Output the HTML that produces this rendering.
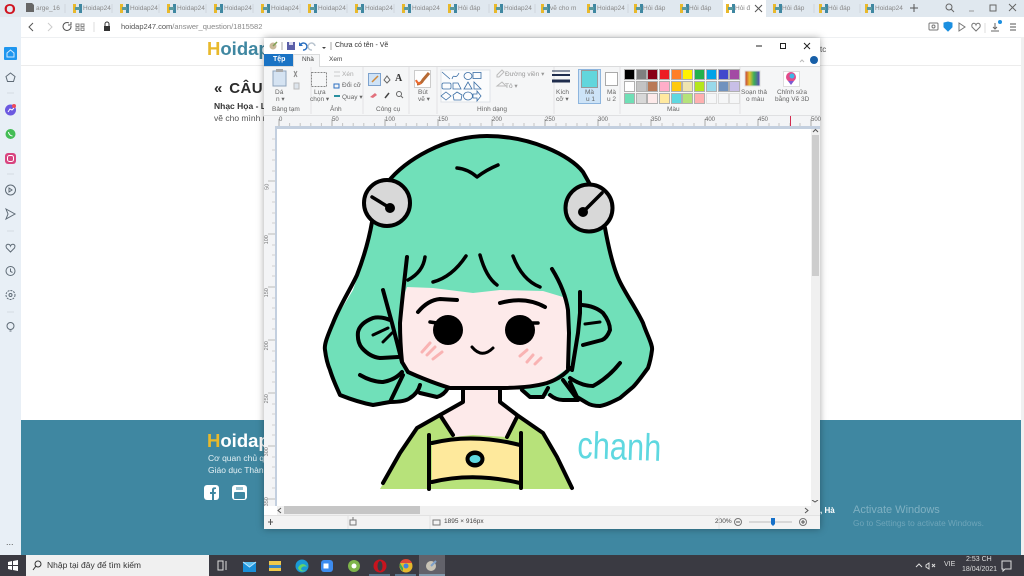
<!DOCTYPE html>
<html lang="vi"><head><meta charset="utf-8"><title>Paint</title>
<style>
html,body{margin:0;padding:0;width:1024px;height:576px;overflow:hidden;background:#fff;font-family:"Liberation Sans","Noto Sans CJK SC",sans-serif}
.a,.t{position:absolute}
.t{white-space:nowrap;line-height:1;color:#444}
#tabs .l{position:absolute;top:5px;font-size:6.5px;color:#888;white-space:nowrap}
.c{position:absolute;width:9px;height:9px;border:1px solid #b0b0b0}
.r{font-size:6.5px;color:#666}
.v{position:absolute;font-size:5.5px;color:#777;line-height:1;transform:rotate(-90deg);left:265px}
.h{position:absolute;top:117px;font-size:6px;line-height:1;color:#666}
</style></head><body>

<!-- browser chrome -->
<div class="a" style="left:0;top:0;width:1024px;height:17px;background:#e0e8ef"></div>
<div class="a" style="left:0;top:17px;width:21px;height:538px;background:#e8eff6"></div>
<div class="a" style="left:21px;top:17px;width:1003px;height:20px;background:#fff;border-bottom:1px solid #eef0f2"></div>
<div class="t" style="left:4px;top:2px;font-size:15px;font-weight:bold;color:#d0131f">O</div>

<div id="tabs">
<svg class="a" style="left:0;top:0" width="1024" height="17">
<defs><g id="hf"><rect x="0" y="0" width="3" height="9" fill="#e8b92c"/><rect x="6" y="0" width="3" height="9" fill="#3f87a1"/><rect x="2" y="3" width="5" height="3" fill="#5a9aa0"/></g></defs>
<rect x="723" y="0" width="43" height="17" fill="#fff"/>
<path d="M65 4v9M112 4v9M159 4v9M206 4v9M253 4v9M300 4v9M347 4v9M394 4v9M489 4v9M535 4v9M628 4v9M814 4v9M860 4v9" stroke="#cfd6dc"/>
<use href="#hf" x="73" y="4"/><use href="#hf" x="120" y="4"/><use href="#hf" x="167" y="4"/><use href="#hf" x="214" y="4"/><use href="#hf" x="261" y="4"/><use href="#hf" x="308" y="4"/><use href="#hf" x="355" y="4"/><use href="#hf" x="402" y="4"/><use href="#hf" x="448" y="4"/><use href="#hf" x="494" y="4"/><use href="#hf" x="541" y="4"/><use href="#hf" x="587" y="4"/><use href="#hf" x="634" y="4"/><use href="#hf" x="680" y="4"/><use href="#hf" x="726" y="4"/><use href="#hf" x="773" y="4"/><use href="#hf" x="819" y="4"/><use href="#hf" x="865" y="4"/>
<path d="M26 3h6l2 2v7h-8z" fill="#666"/>
<path d="M755 5l7 7m0-7l-7 7" stroke="#555" stroke-width="1" fill="none"/>
<path d="M914 4v8m-4-4h8" stroke="#555" stroke-width="1" fill="none"/>
<circle cx="949" cy="7" r="3" stroke="#666" fill="none"/><path d="M951 9l3 3" stroke="#666"/>
<path d="M969 11h5" stroke="#999"/>
<rect x="990" y="5" width="6" height="6" stroke="#666" fill="none"/>
<path d="M1009 4l7 7m0-7l-7 7" stroke="#666" fill="none"/>
</svg>
<span class="l" style="left:36px">arge_16</span>
<span class="l" style="left:83px">Hoidap24</span><span class="l" style="left:130px">Hoidap24</span><span class="l" style="left:177px">Hoidap24</span><span class="l" style="left:224px">Hoidap24</span><span class="l" style="left:271px">Hoidap24</span><span class="l" style="left:318px">Hoidap24</span><span class="l" style="left:365px">Hoidap24</span><span class="l" style="left:412px">Hoidap24</span>
<span class="l" style="left:458px">Hỏi đáp</span><span class="l" style="left:504px">Hoidap24</span><span class="l" style="left:550px">vẽ cho m</span><span class="l" style="left:597px">Hoidap24</span><span class="l" style="left:643px">Hỏi đáp</span><span class="l" style="left:689px">Hỏi đáp</span><span class="l" style="left:735px">Hỏi đ</span><span class="l" style="left:782px">Hỏi đáp</span><span class="l" style="left:828px">Hỏi đáp</span><span class="l" style="left:875px">Hoidap24</span>
</div>

<!-- address bar -->
<svg class="a" style="left:21px;top:17px" width="1003" height="20" fill="none" stroke="#555">
<path d="M12 6l-4 4 4 4"/><path d="M27 6l4 4-4 4" stroke="#ccc"/>
<path d="M48 6a4 4 0 1 0 2 3M50 5v3h-3"/>
<rect x="55" y="7" width="3" height="2.500" stroke="#888"/><rect x="60" y="7" width="3" height="2.500" stroke="#888"/><rect x="55" y="11" width="3" height="2.500" stroke="#888"/><rect x="60" y="11" width="3" height="2.500" stroke="#888"/>
<path d="M73 5v10" stroke="#ddd"/>
<rect x="83" y="9" width="6" height="5" fill="#333" stroke="none"/><path d="M84 9V7a2 2 0 0 1 4 0v2" stroke="#333"/>
<rect x="908" y="6" width="9" height="7" rx="1" stroke="#777"/><circle cx="912.500" cy="9.500" r="1.500" stroke="#777"/>
<path d="M923 6l4-1 4 1v4l-4 4-4-4z" fill="#1b8fe0" stroke="#1b8fe0"/>
<path d="M938 6l6 4-6 4z" stroke="#777"/>
<path d="M955 14l-4-4c-1-4 3-5 4-2 1-3 5-2 4 2z" stroke="#777"/>
<path d="M964 6v10" stroke="#ddd"/>
<path d="M974 6v6m-2-2l2 2 2-2M970 14h8" stroke="#666"/>
<circle cx="979" cy="5" r="2" fill="#1b8fe0" stroke="none"/>
<path d="M989 7h6M989 10h6M989 13h6" stroke="#555"/>
</svg>
<div class="t" style="left:121px;top:23px;font-size:7.500px;color:#555">hoidap247.com<span style="color:#888">/answer_question/1815582</span></div>

<!-- sidebar icons -->
<svg class="a" style="left:0;top:40px" width="21" height="310" fill="none" stroke="#5f6b76">
<rect x="4" y="7" width="13" height="13" rx="1" fill="#1e96ef" stroke="none"/><path d="M7 13l3.500-3 3.500 3v4H7z" stroke="#cfe8ff"/>
<path d="M10.500 33l4.500 3.500-1.500 5h-6l-1.500-5z"/>
<path d="M7 53h7" stroke="#d5dbe1"/>
<circle cx="10.500" cy="70" r="5.500" fill="#6c59e0" stroke="none"/><circle cx="14" cy="66" r="2" fill="#ef4a5a" stroke="none"/><path d="M8 72l2-3 2 1 2-2" stroke="#fff"/>
<circle cx="10.500" cy="94" r="5" fill="#43bd55" stroke="none"/><path d="M8.500 92c0 2 2 4 4 4" stroke="#fff"/>
<rect x="5" y="113" width="11" height="11" rx="3" fill="#d8447f" stroke="none"/><rect x="7.500" y="115.500" width="6" height="6" rx="2" stroke="#fff"/>
<path d="M7 134h7" stroke="#d5dbe1"/>
<circle cx="10.500" cy="150" r="5"/><path d="M9 148l3 2-3 2z"/>
<path d="M6 169l9 5-9 5 2-5z"/>
<path d="M7 191h7" stroke="#d5dbe1"/>
<path d="M10.500 212l-4-4c-2-4 3-5 4-2 1-3 6-2 4 2z"/>
<circle cx="10.500" cy="231" r="4.500"/><path d="M10.500 228.500v3l2 1"/>
<circle cx="10.500" cy="255" r="4.500" stroke-dasharray="2 1"/><circle cx="10.500" cy="255" r="1.500"/>
<path d="M7 272h7" stroke="#d5dbe1"/>
<circle cx="10.500" cy="286" r="3.500"/><path d="M9.500 291h2"/>
</svg>
<div class="t" style="left:6px;top:538px;font-size:9px;color:#555">...</div>

<!-- page -->
<div class="a" style="left:21px;top:65px;width:1000px;height:1px;background:#ececec"></div>
<div class="t" style="left:207px;top:40px;font-size:18.500px;font-weight:bold;color:#3f87a1"><span style="color:#e8b92c">H</span>oidap</div>
<div class="t" style="left:820px;top:46px;font-size:8px;color:#555">tc</div>
<div class="t" style="left:214px;top:81px;font-size:15px;font-weight:bold;color:#2b2b2b;letter-spacing:.4px;word-spacing:2px">« CÂU HỎI</div>
<div class="t" style="left:214px;top:102px;font-size:8.500px;font-weight:bold;color:#333">Nhạc Họa - Lớp</div>
<div class="t" style="left:214px;top:114px;font-size:8.500px;color:#555">vẽ cho mình nhé</div>

<!-- footer -->
<div class="a" style="left:21px;top:420px;width:1000px;height:135px;background:#3f87a1"></div>
<div class="t" style="left:207px;top:432px;font-size:18.500px;font-weight:bold;color:#fff"><span style="color:#e8b92c">H</span>oidap</div>
<div class="t" style="left:208px;top:454px;font-size:8.500px;color:#e4f0f4">Cơ quan chủ quản: Công ty</div>
<div class="t" style="left:208px;top:466px;font-size:8.500px;color:#e4f0f4">Giáo dục Thành Phát</div>
<svg class="a" style="left:203px;top:484px" width="46" height="18">
<rect x="1" y="1" width="15" height="15" rx="3" fill="#fff"/><path d="M9 16v-6H7V8h2V6c0-2 1-3 4-2.500V5c-2 0-2 .5-2 1.500V8h2l-.4 2H11v6z" fill="#3f87a1"/>
<rect x="29" y="1" width="15" height="15" rx="3" fill="#fff"/><rect x="31" y="8" width="11" height="7" rx="1" fill="#3f87a1"/><rect x="33" y="3" width="7" height="3" fill="#9cc3d1"/>
</svg>
<div class="t" style="left:820px;top:507px;font-size:8px;color:#fff;font-weight:bold;z-index:1">, Hà</div>
<div class="t" style="left:853px;top:505px;font-size:11px;color:#7fb0c2">Activate Windows</div>
<div class="t" style="left:853px;top:519px;font-size:8.300px;color:#6ea5b9">Go to Settings to activate Windows.</div>
<div class="a" style="left:1021px;top:37px;width:3px;height:518px;background:#f0f0f0"></div>

<!-- PAINT WINDOW -->
<div class="a" style="left:264px;top:38px;width:556px;height:491px;background:#fff;box-shadow:0 0 7px rgba(0,0,0,.35)"></div>
<div class="a" style="left:264px;top:66px;width:556px;height:49px;background:#f5f6f7;border-top:1px solid #dadbdc;box-sizing:border-box"></div>
<div class="a" style="left:264px;top:54px;width:29px;height:12px;background:#1a73c4"></div>
<div class="t" style="left:273px;top:56px;font-size:7px;color:#fff;font-weight:bold">Tệp</div>
<div class="a" style="left:293px;top:54px;width:27px;height:13px;background:#f5f6f7;border:1px solid #dadbdc;border-bottom:0;box-sizing:border-box"></div>
<div class="t" style="left:302px;top:57px;font-size:6.500px">Nhà</div>
<div class="t" style="left:329px;top:57px;font-size:6.500px">Xem</div>
<div class="t" style="left:335px;top:42px;font-size:7px;color:#333">Chưa có tên - Vẽ</div>

<svg class="a" style="left:264px;top:38px" width="556" height="78" fill="none">
<defs><linearGradient id="sp" x1="0" x2="1" y1="0" y2="0"><stop offset="0" stop-color="#c23a3a"/><stop offset=".3" stop-color="#e8c02e"/><stop offset=".6" stop-color="#3cae59"/><stop offset="1" stop-color="#5a3fc0"/></linearGradient></defs>
<circle cx="9" cy="8" r="3.500" fill="#c9b99a"/><path d="M9 8l4-4" stroke="#7fa055" stroke-width="1.500"/>
<path d="M18 4v8" stroke="#aaa"/>
<rect x="23" y="4" width="8" height="8" fill="#5b5fa8"/><rect x="25" y="4" width="4" height="3" fill="#d8d8ee"/>
<path d="M36 8a3.500 3.500 0 1 1 3 4" stroke="#2a6fc0" stroke-width="1.500"/><path d="M35 4v4h4" fill="#2a6fc0"/>
<path d="M51 8a3.500 3.500 0 1 0-3 4" stroke="#b9c4cf" stroke-width="1.500"/>
<path d="M58 9l2 2 2-2z" fill="#444"/><path d="M67 4v8" stroke="#aaa"/>
<path d="M492 8h6" stroke="#222"/><rect x="516.500" y="5.500" width="5" height="5" stroke="#222"/>
<path d="M540 5l6 6m0-6l-6 6" stroke="#222"/>
<path d="M536 24l2-2 2 2" stroke="#bbb"/><circle cx="550" cy="22" r="4" fill="#175fa8"/>
<path d="M47 29v47M99 29v47M145 29v47M173 29v47M290 29v47M356 29v47M476 29v47" stroke="#e2e3e4"/>
<rect x="9" y="33" width="13" height="15" fill="#d5e3f2" stroke="#8ea4bd"/><rect x="12" y="31" width="7" height="3" fill="#aaa"/>
<path d="M30 33l3 6m0-6l-3 6" stroke="#888"/><rect x="30" y="45" width="5" height="6" fill="#dde4ec" stroke="#bbb"/>
<rect x="47.500" y="34.500" width="15" height="14" stroke="#888" stroke-dasharray="2 1"/>
<path d="M70 34h6M70 38h6" stroke="#ccc"/><rect x="70" y="46" width="5" height="4" stroke="#2a6fc0"/><path d="M70 58h6" stroke="#2a90a0" stroke-width="2"/>
<rect x="104.500" y="35.500" width="12" height="12" fill="#cfe3f7" stroke="#7da2ce"/><path d="M108 44l6-6" stroke="#d08a3a" stroke-width="1.500"/>
<path d="M120 42l3-4 3 4-3 3z" stroke="#666"/>
<path d="M106 59l5-4 2 2-4 3z" fill="#e2707c"/><path d="M121 60l4-5" stroke="#444" stroke-width="1.500"/>
<circle cx="135" cy="56" r="2.500" stroke="#666"/><path d="M137 58l2 2" stroke="#666"/>
<rect x="150.500" y="32.500" width="16" height="17" fill="#fff" stroke="#ccc"/><path d="M153 46c3 0 5-2 6-4l6-7" stroke="#b76a34" stroke-width="3"/><path d="M152 42c1 3 3 4 5 3" stroke="#ed6a2f" stroke-width="2"/>
<rect x="177" y="32" width="49" height="32" fill="#fbfcfd" stroke="#dfe3e8"/>
<g stroke="#3a6ea5" stroke-width=".800">
<path d="M178 34l8 7M188 41c2-7 3 2 7-6"/><ellipse cx="204" cy="38" rx="4" ry="3.500"/><rect x="209" y="34.500" width="8" height="6"/>
<rect x="178" y="45" width="9" height="6" rx="1.500"/><path d="M189 51v-6h5l3 6zM200 51l4-7 4 7zM210 44v7h7z"/>
<path d="M182 54l5 4-5 4-5-4zM193 54l5 3-1 5h-7l-1-5z"/><ellipse cx="204" cy="58" rx="4.500" ry="4"/><path d="M209 56h4v-3l4 5-4 5v-3h-4z"/>
</g>
<path d="M233 37l5-5 2 2-5 5h-2zM233 48l5-4 4 4z" stroke="#bbb"/>
<path d="M288 33h18" stroke="#1f2d4d"/><path d="M288 37h18" stroke="#1f2d4d" stroke-width="2"/><path d="M288 43h18" stroke="#1f2d4d" stroke-width="3"/>
<rect x="314.500" y="31.500" width="22" height="34" fill="#cde3f7" stroke="#8db5de"/>
<rect x="317.500" y="32.500" width="16" height="17" fill="#62d6dc" stroke="#999"/>
<rect x="341.500" y="34.500" width="12" height="13" fill="#fff" stroke="#aaa"/>
<rect x="481" y="33" width="15" height="15" fill="url(#sp)" stroke="#ddd"/>
<rect x="519.500" y="33.500" width="16" height="15" fill="#fff" stroke="#ddd"/><circle cx="527" cy="39" r="5" fill="#e34a8a"/><circle cx="528" cy="38" r="2.500" fill="#3eb7e6"/><path d="M524 43l3 4 3-4z" fill="#7b5bd0"/>
</svg>

<!-- palette -->
<div class="c" style="left:624px;top:69px;background:#000"></div><div class="c" style="left:636px;top:69px;background:#7f7f7f"></div><div class="c" style="left:647px;top:69px;background:#880015"></div><div class="c" style="left:659px;top:69px;background:#ed1c24"></div><div class="c" style="left:671px;top:69px;background:#ff7f27"></div><div class="c" style="left:682px;top:69px;background:#fff200"></div><div class="c" style="left:694px;top:69px;background:#22b14c"></div><div class="c" style="left:706px;top:69px;background:#00a2e8"></div><div class="c" style="left:718px;top:69px;background:#3f48cc"></div><div class="c" style="left:729px;top:69px;background:#a349a4"></div>
<div class="c" style="left:624px;top:81px;background:#fff"></div><div class="c" style="left:636px;top:81px;background:#c3c3c3"></div><div class="c" style="left:647px;top:81px;background:#b97a57"></div><div class="c" style="left:659px;top:81px;background:#ffaec9"></div><div class="c" style="left:671px;top:81px;background:#ffc90e"></div><div class="c" style="left:682px;top:81px;background:#efe4b0"></div><div class="c" style="left:694px;top:81px;background:#b5e61d"></div><div class="c" style="left:706px;top:81px;background:#99d9ea"></div><div class="c" style="left:718px;top:81px;background:#7092be"></div><div class="c" style="left:729px;top:81px;background:#c8bfe7"></div>
<div class="c" style="left:624px;top:93px;background:#6fdfb6"></div><div class="c" style="left:636px;top:93px;background:#d8d8d8"></div><div class="c" style="left:647px;top:93px;background:#fdeaea"></div><div class="c" style="left:659px;top:93px;background:#ffe9a0"></div><div class="c" style="left:671px;top:93px;background:#5fd8e0"></div><div class="c" style="left:682px;top:93px;background:#b5e27a"></div><div class="c" style="left:694px;top:93px;background:#ffb0b0"></div><div class="c" style="left:706px;top:93px;background:#f5f6f7;border-color:#ddd"></div><div class="c" style="left:718px;top:93px;background:#f5f6f7;border-color:#ddd"></div><div class="c" style="left:729px;top:93px;background:#f5f6f7;border-color:#ddd"></div>

<!-- ribbon labels -->
<div class="t r" style="left:275px;top:90px">Dá</div><div class="t r" style="left:276px;top:97px">n ▾</div>
<div class="t r" style="left:272px;top:107px">Bảng tạm</div>
<div class="t r" style="left:314px;top:90px">Lựa</div><div class="t r" style="left:310px;top:97px">chọn ▾</div>
<div class="t r" style="left:342px;top:72px;color:#aaa">Xén</div><div class="t r" style="left:342px;top:83px">Đổi cỡ</div><div class="t r" style="left:342px;top:95px">Quay ▾</div>
<div class="t r" style="left:330px;top:107px">Ảnh</div>
<div class="t" style="left:395px;top:74px;font-size:10px;font-weight:bold;font-family:'Liberation Serif',serif;color:#333">A</div>
<div class="t r" style="left:376px;top:107px">Công cụ</div>
<div class="t r" style="left:418px;top:90px">Bút</div><div class="t r" style="left:418px;top:97px">vẽ ▾</div>
<div class="t r" style="left:477px;top:107px">Hình dạng</div>
<div class="t r" style="left:505px;top:72px;color:#999">Đường viền ▾</div><div class="t r" style="left:505px;top:84px;color:#999">Tô ▾</div>
<div class="t r" style="left:556px;top:90px">Kích</div><div class="t r" style="left:556px;top:97px">cỡ ▾</div>
<div class="t r" style="left:585px;top:90px">Mà</div><div class="t r" style="left:586px;top:97px">u 1</div>
<div class="t r" style="left:607px;top:90px">Mà</div><div class="t r" style="left:607px;top:97px">u 2</div>
<div class="t r" style="left:667px;top:107px">Màu</div>
<div class="t r" style="left:741px;top:90px">Soạn thả</div><div class="t r" style="left:746px;top:97px">o màu</div>
<div class="t r" style="left:777px;top:90px">Chỉnh sửa</div><div class="t r" style="left:775px;top:97px">bằng Vẽ 3D</div>

<!-- rulers -->
<div class="a" style="left:264px;top:115px;width:556px;height:11px;background:#f3f4f6;border-top:1px solid #dfe0e2;box-sizing:border-box"></div>
<div class="a" style="left:264px;top:126px;width:556px;height:3px;background:#c3cfdf"></div>
<div class="a" style="left:264px;top:126px;width:11px;height:380px;background:#f3f4f6"></div>
<div class="a" style="left:275px;top:126px;width:2px;height:380px;background:#c3cfdf"></div>
<svg class="a" style="left:264px;top:115px" width="556" height="392" fill="none">
<path d="M15 4v7M68 4v7M121 4v7M174 4v7M228 4v7M281 4v7M334 4v7M387 4v7M441 4v7M494 4v7M547 4v7" stroke="#aaa"/>
<path d="M25.600 8v3M36.200 8v3M46.800 8v3M57.400 8v3M78.600 8v3M89.200 8v3M99.800 8v3M110.400 8v3M131.600 8v3M142.200 8v3M152.800 8v3M163.400 8v3M185 8v3M196 8v3M206 8v3M217 8v3M239 8v3M249 8v3M260 8v3M270 8v3M292 8v3M302 8v3M313 8v3M323 8v3M345 8v3M356 8v3M366 8v3M377 8v3M398 8v3M409 8v3M419 8v3M430 8v3M452 8v3M462 8v3M473 8v3M483 8v3M505 8v3M515 8v3M526 8v3M536 8v3" stroke="#c4c4c4"/>
<path d="M526.500 1v10" stroke="#d22b4f"/>
<path d="M4 66h7M4 119h7M4 172h7M4 225h7M4 278h7M4 331h7M4 384h7" stroke="#bbb"/>
<path d="M8 24h3M8 35h3M8 45h3M8 56h3M8 77h3M8 87h3M8 98h3M8 108h3M8 130h3M8 140h3M8 151h3M8 161h3M8 183h3M8 193h3M8 204h3M8 214h3M8 236h3M8 246h3M8 257h3M8 267h3M8 289h3M8 299h3M8 310h3M8 320h3M8 342h3M8 352h3M8 363h3M8 373h3" stroke="#d0d0d0"/>
</svg>
<div class="h" style="left:279px">0</div><div class="h" style="left:332px">50</div><div class="h" style="left:385px">100</div><div class="h" style="left:438px">150</div><div class="h" style="left:492px">200</div><div class="h" style="left:545px">250</div><div class="h" style="left:598px">300</div><div class="h" style="left:651px">350</div><div class="h" style="left:705px">400</div><div class="h" style="left:758px">450</div><div class="h" style="left:811px">500</div>
<div class="v" style="top:184px">50</div><div class="v" style="top:237px;left:263px">100</div><div class="v" style="top:290px;left:263px">150</div><div class="v" style="top:343px;left:263px">200</div><div class="v" style="top:396px;left:263px">250</div><div class="v" style="top:449px;left:263px">300</div><div class="v" style="top:499px;left:263px">350</div>

<!-- canvas drawing -->
<svg class="a" style="left:277px;top:129px" width="534" height="377" viewBox="277 129 534 377">
<rect x="277" y="129" width="534" height="377" fill="#fff"/>
<path d="M380 489L400 453L417 428L440 415L463 402L500 402L517 415L543 433L557 457L573 489Z" fill="#b7e27a"/>
<path d="M440 415L463 402V385H500V402L517 415L507 437L473 435L453 437Z" fill="#fdeaea"/>
<path d="M432 443L473 437L520 445V483L473 475L432 482Z" fill="#fee99c"/>
<!-- hair fill -->
<path d="M387 183C405 160 445 136 487 136C530 136 570 155 583 172L592 188L605 228C609 250 614 270 620 282C627 296 637 310 643 323C647 335 653 345 652 350C651 358 650 362 648 368C642 376 638 382 633 387L620 398L600 406L587 403L577 400L563 400L550 395L543 397L530 397L522 390L490 385L448 388L437 397L420 393L410 398L390 402L373 405L340 395L330 370L325 350L333 323L353 290L365 255L372 222Z" fill="#70e0b9"/>
<!-- face fill -->
<path d="M407 287L433 288L473 293L500 290L543 291L563 297L569 313L569 333L568 368L547 383L500 388H460L450 388L408 372L402 362L400 323L404 295Z" fill="#fdeaea"/>
<g stroke="#000" stroke-width="4" fill="none" stroke-linecap="round" stroke-linejoin="round">
<path d="M387 183C405 160 445 136 487 136C530 136 570 155 583 172L592 188"/>
<path d="M372 222C368 245 362 262 357 275C350 290 340 305 333 323C327 337 324 345 325 350C326 358 327 363 330 370C333 380 337 388 340 395C350 399 362 403 373 405L390 402L403 375"/>
<path d="M605 228C609 250 614 270 620 282C627 296 637 310 643 323C647 335 653 345 652 350C651 358 650 362 648 368C642 376 638 382 633 387L620 398C612 402 606 405 600 406C595 406 590 405 587 403L577 397L570 382"/>
<path d="M457 168Q468 169 477 177Q486 170 498 165" stroke-width="3.500"/>
<path d="M407 257C405 275 402 300 400 323C400 340 401 352 402 362L408 372"/>
<path d="M425 257Q423 272 408 280" stroke-width="3.500"/>
<path d="M466 256Q452 277 433 282" stroke-width="3.500"/><path d="M480 255Q486 277 497 285" stroke-width="3.500"/>
<path d="M513 256Q522 280 540 287" stroke-width="3.500"/>
<path d="M552 269Q565 290 568 310L569 333L568 368"/>
<path d="M580 292L580 313L578 333L572 370"/>
<path d="M383 290L392 323L402 362"/>
<path d="M408 372Q430 382 450 388L500 388Q530 388 547 383Q562 378 570 368"/>
<path d="M418 312Q428 300 440 299L457 300" stroke-width="4"/><path d="M500 303Q525 296 545 307" stroke-width="4"/>
<path d="M430 322L437 323M538 323L531 323" stroke-width="3.500"/>
<path d="M472 347Q482 359 493 348" stroke-width="3"/>
<path d="M390 320Q380 316 373 318Q360 323 358 332Q357 342 362 348Q370 357 380 358L398 357"/>
<path d="M373 335L388 328M383 342L392 333" stroke-width="3"/>
<path d="M582 305Q595 306 603 313Q610 322 610 330Q607 338 602 340L583 345"/><path d="M585 324L600 322" stroke-width="3"/>
<path d="M360 375Q372 382 383 382Q395 380 402 372"/>
<path d="M620 363Q608 378 593 386Q582 386 570 378"/>
<path d="M390 402Q405 402 410 398Q418 393 420 385"/><path d="M420 393L437 397Q444 395 448 388"/>
<path d="M522 390L530 397L543 397L548 388"/><path d="M550 395Q556 400 563 400L578 400L563 380"/>
<path d="M463 390V402L440 415L417 428L400 453L383 483"/><path d="M500 390V402L517 415L543 433L557 457L572 488"/>
<path d="M440 415L453 435"/><path d="M517 417L507 437"/>
<path d="M432 443Q473 433 520 445"/><path d="M432 482Q473 472 520 483"/>
<path d="M429 435V489M521 433V488"/>
</g>
<g stroke="#000" stroke-width="4" fill="#d8d8d8"><circle cx="387" cy="203" r="23"/><circle cx="589" cy="208" r="23.500"/></g>
<path d="M372 197L390 208M602 193L583 212" stroke="#000" stroke-width="3.500" stroke-linecap="round"/>
<circle cx="390" cy="208" r="5"/><circle cx="583" cy="212" r="5"/>
<circle cx="448" cy="330" r="15"/><circle cx="520" cy="330" r="15"/>
<g stroke="#f9b3b3" stroke-width="3" stroke-linecap="round"><path d="M422 352L430 343M427 355L435 347M433 359L442 352M520 356L527 350M527 362L533 355M535 364L541 358"/></g>
<ellipse cx="475" cy="459" rx="9.500" ry="8.500"/><ellipse cx="475" cy="459" rx="5.500" ry="4" fill="#5fd8e0"/>
<text x="577" y="458" font-family="Liberation Sans,sans-serif" font-size="38" textLength="84" lengthAdjust="spacingAndGlyphs" fill="#5fd8e0" transform="rotate(2 577 458)">chanh</text>
</svg>

<!-- scrollbars -->
<div class="a" style="left:811px;top:129px;width:9px;height:377px;background:#f0f0f0"></div>
<div class="a" style="left:812px;top:135px;width:7px;height:141px;background:#cdcdcd"></div>
<div class="a" style="left:277px;top:506px;width:543px;height:9px;background:#f0f0f0"></div>
<div class="a" style="left:284px;top:506px;width:136px;height:8px;background:#c6c6c6"></div>
<!-- status -->
<div class="a" style="left:264px;top:515px;width:556px;height:14px;background:#f3f3f3;border-top:1px solid #e2e2e2;box-sizing:border-box"></div>
<div class="t" style="left:444px;top:519px;font-size:6.500px;color:#444">1895 × 916px</div>
<div class="t" style="left:715px;top:519px;font-size:6.500px;color:#444">200%</div>
<svg class="a" style="left:264px;top:500px" width="556" height="29" fill="none">
<path d="M4 22h5M6.500 19v6" stroke="#555"/>
<path d="M86 20h6v5h-6zM89 17v3" stroke="#777"/><path d="M169 20h7v5h-7z" stroke="#777"/>
<path d="M17 8l-3 2.500 3 2.500" stroke="#555"/>
<path d="M541 8l3 2.500-3 2.500" stroke="#555"/>
<path d="M548 0l3 2 3-2" stroke="#555"/>
<path d="M84 15V29M166 15V29M455 15V29" stroke="#e2e2e2"/>
<circle cx="474" cy="22" r="3.500" stroke="#777"/><path d="M472 22h4" stroke="#555"/>
<path d="M485 22h43" stroke="#d0d0d0" stroke-width="1.500"/><path d="M507 18h4v6l-2 2-2-2z" fill="#1570c9"/>
<circle cx="539" cy="22" r="3.500" stroke="#777"/><path d="M537 22h4M539 20v4" stroke="#555"/>
</svg>
<svg class="a" style="left:811px;top:127px" width="9" height="8"><path d="M2 5l2.500-2.500L7 5" stroke="#555" fill="none"/></svg>

<!-- taskbar -->
<div class="a" style="left:0;top:555px;width:1024px;height:21px;background:#3a3a42"></div>
<div class="a" style="left:26px;top:555px;width:183px;height:21px;background:#f0f0f0"></div>
<div class="t" style="left:47px;top:561px;font-size:8.500px;color:#333">Nhập tại đây để tìm kiếm</div>
<div class="a" style="left:419px;top:555px;width:26px;height:21px;background:#62626a"></div>
<svg class="a" style="left:0;top:555px" width="1024" height="21" fill="none">
<path d="M8 7l4-1v4H8zM13 6l5-1v5h-5zM8 11h4v4l-4-1zM13 11h5v5l-5-1z" fill="#fff"/>
<circle cx="38" cy="9" r="3" stroke="#333"/><path d="M36 11l-3 4" stroke="#333"/>
<rect x="218" y="6" width="5" height="9" stroke="#ddd"/><path d="M226 6v9" stroke="#ddd"/>
<rect x="243" y="7" width="13" height="10" fill="#1a8fd8"/><path d="M243 7l6.500 5 6.500-5" stroke="#bfe6ff" fill="#5cc0f2"/>
<rect x="269" y="6" width="12" height="10" fill="#f0c84a"/><rect x="269" y="10" width="12" height="3" fill="#3b86c4"/>
<circle cx="302" cy="11" r="6.500" fill="#1a9ad6"/><path d="M298 13c2-5 7-5 9-1-2-1-5-1-6 2 1 2 3 2 5 1-3 3-7 1-8-2z" fill="#62d46a"/>
<rect x="321" y="5" width="12" height="12" rx="3" fill="#3d8cf0"/><rect x="323.500" y="8.500" width="5" height="5" fill="#fff"/>
<circle cx="354" cy="11" r="6" fill="#7fb54a"/><circle cx="354" cy="11" r="2.500" fill="#fff"/>
<ellipse cx="380" cy="11" rx="6.500" ry="6.500" fill="#c8141e"/><ellipse cx="380" cy="11" rx="2.500" ry="5" fill="#3a3a42"/>
<circle cx="406" cy="11" r="6.500" fill="#e5b82d"/><path d="M400 8a6.500 6.500 0 0 1 12 0h-6z" fill="#df4a37"/><path d="M403 16a6.500 6.500 0 0 1-3-8l3 5z" fill="#3cab54"/><circle cx="406" cy="11" r="2.500" fill="#3f84e0"/>
<circle cx="431" cy="11" r="5" fill="#c9c4b6"/><path d="M431 11l5-5" stroke="#7fa0c8" stroke-width="2"/>
<path d="M369 20h21M395 20h21" stroke="#7eb6dc"/><path d="M419 20h26" stroke="#9fd0ef"/>
<path d="M916 12l3-3 3 3" stroke="#ddd"/>
<path d="M929 8v6l-3-2v-2zM932 9l3 3m0-3l-3 3" stroke="#ddd"/>
<path d="M1002 6h9v8h-6l-2 2v-2h-1z" stroke="#ddd"/>
</svg>
<div class="t" style="left:944px;top:561px;font-size:7px;color:#ddd">VIE</div>
<div class="t" style="left:966px;top:556px;font-size:7px;color:#ddd">2:53 CH</div>
<div class="t" style="left:962px;top:566px;font-size:7px;color:#ddd">18/04/2021</div>
</body></html>
